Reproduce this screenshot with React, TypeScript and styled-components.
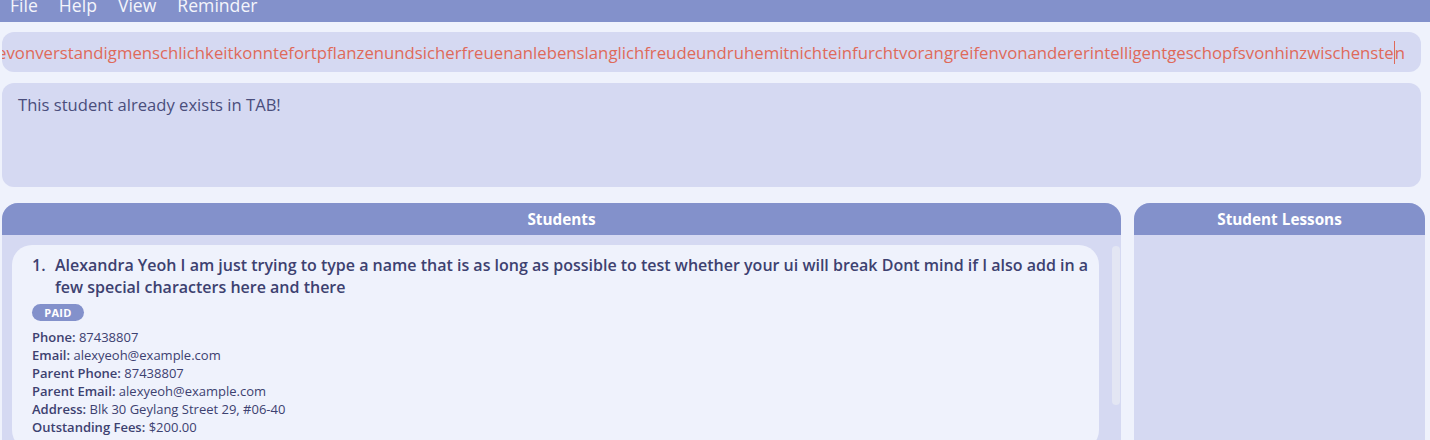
import React from "react";
import styled, { createGlobalStyle } from "styled-components";

const GlobalStyle = createGlobalStyle`
  html, body { margin: 0; padding: 0; background: #eff2fc; }
  body { font-family: "Open Sans", "Noto Sans", sans-serif; }
  * { box-sizing: border-box; }
`;

const Page = styled.div`
  height: 440px;
  overflow: hidden;
  display: flex;
  flex-direction: column;
  background: #eff2fc;
`;

const MenuBar = styled.div`
  height: 22px;
  flex-shrink: 0;
  background: #8391cb;
  display: flex;
  gap: 21px;
  padding-left: 10px;
  overflow: hidden;
`;

const MenuItem = styled.span`
  font-size: 17.6px;
  line-height: 17px;
  margin-top: -3px;
  color: #f4f5fb;
  font-weight: 400;
`;

const Content = styled.div`
  flex: 1;
  min-height: 0;
  display: flex;
  flex-direction: column;
  padding-left: 2px;
`;

const CommandBox = styled.div`
  margin-top: 10px;
  margin-right: 9px;
  height: 40px;
  border-radius: 12px;
  background: #d5d9f2;
  display: flex;
  align-items: center;
  justify-content: flex-end;
  overflow: hidden;
  padding-right: 16px;
`;

const CommandText = styled.span`
  flex-shrink: 0;
  white-space: nowrap;
  font-size: 16.75px;
  color: #df6a5a;
  display: flex;
  align-items: center;
`;

const Caret = styled.span`
  display: inline-block;
  width: 1px;
  height: 23px;
  background: #df6a5a;
`;

const ResultBox = styled.div`
  margin-top: 11px;
  margin-right: 9px;
  height: 104px;
  border-radius: 12px;
  background: #d5d9f2;
  padding: 10px 16px;
  font-size: 16.6px;
  color: #4a4e7c;
`;

const PanelsRow = styled.div`
  margin-top: 16px;
  flex: 1;
  min-height: 0;
  display: flex;
  gap: 13px;
  padding-right: 5px;
`;

const Panel = styled.section<{ $width?: number }>`
  ${(p) => (p.$width ? `width: ${p.$width}px;` : "flex: 1;")}
  flex-shrink: 0;
  display: flex;
  flex-direction: column;
  background: #d5d9f2;
  border-radius: 16px 16px 0 0;
  overflow: hidden;
`;

const PanelHeader = styled.div`
  height: 32px;
  flex-shrink: 0;
  background: #8391cb;
  color: #ffffff;
  font-weight: 700;
  font-size: 15.3px;
  display: flex;
  align-items: center;
  justify-content: center;
`;

const ListBody = styled.div`
  flex: 1;
  min-height: 0;
  display: flex;
  gap: 13px;
  padding: 10px 1px 0 10px;
`;

const CardColumn = styled.div`
  flex: 1;
  display: flex;
  flex-direction: column;
  gap: 10px;
`;

const ScrollThumb = styled.div`
  width: 8px;
  height: 159px;
  margin-top: 1px;
  border-radius: 4px;
  background: #e3e6f3;
  flex-shrink: 0;
`;

const Card = styled.article`
  background: #eff2fc;
  border-radius: 20px;
  padding: 9px 10px 14px 20px;
  color: #3d4170;
`;

const NameRow = styled.div`
  display: flex;
  font-weight: 600;
  font-size: 16px;
  line-height: 22px;
`;

const Index = styled.span`
  width: 23px;
  flex-shrink: 0;
`;

const Badge = styled.span`
  display: inline-flex;
  align-items: center;
  justify-content: center;
  margin: 6px 0 0 0;
  width: 52px;
  height: 17px;
  border-radius: 9px;
  background: #8391cb;
  color: #ffffff;
  font-weight: 700;
  font-size: 11px;
  letter-spacing: 0.3px;
`;

const Details = styled.div`
  margin-top: 6px;
  font-size: 13px;
  line-height: 18px;
`;

const Label = styled.b`
  font-weight: 600;
`;

const COMMAND =
  "add n/Hubert Blaine Wolfeschlegelsteinhausenbergerdorffwelchevoralternwarengewissenhaftschaferswessenschafewarenwohlgepflegeundsorgfaltigkeitbeschutzenvonangreifendurchihrraubgierigfeindewelchevoralternzwolftausendjahresvorandieerscheinenvanderersteerdemenschderraumschiffgebrauchlichtalsseinursprungvonkraftgestartseinlangefahrthinzwischensternartigraumaufdersuchenachdiesternwelchegehabtbewohnbarplanetenkreisedrehensichundwohinderneurassevonverstandigmenschlichkeitkonntefortpflanzenundsicherfreuenanlebenslanglichfreudeundruhemitnichteinfurchtvorangreifenvonandererintelligentgeschopfsvonhinzwischenste";

const details: [string, string][] = [
  ["Phone", "87438807"],
  ["Email", "alexyeoh@example.com"],
  ["Parent Phone", "87438807"],
  ["Parent Email", "alexyeoh@example.com"],
  ["Address", "Blk 30 Geylang Street 29, #06-40"],
  ["Outstanding Fees", "$200.00"],
];

export default function App() {
  return (
    <>
      <GlobalStyle />
      <Page>
        <MenuBar>
          <MenuItem>File</MenuItem>
          <MenuItem>Help</MenuItem>
          <MenuItem>View</MenuItem>
          <MenuItem>Reminder</MenuItem>
        </MenuBar>
        <Content>
          <CommandBox>
            <CommandText>
              {COMMAND}
              <Caret />n
            </CommandText>
          </CommandBox>
          <ResultBox>This student already exists in TAB!</ResultBox>
          <PanelsRow>
            <Panel>
              <PanelHeader>Students</PanelHeader>
              <ListBody>
                <CardColumn>
                  <Card>
                    <NameRow>
                      <Index>1.</Index>
                      <span>
                        Alexandra Yeoh I am just trying to type a name that is as long as possible to test
                        whether your ui will break Dont mind if I also add in a few special characters here and
                        there
                      </span>
                    </NameRow>
                    <Badge>PAID</Badge>
                    <Details>
                      {details.map(([k, v]) => (
                        <div key={k}>
                          <Label>{k}:</Label> {v}
                        </div>
                      ))}
                    </Details>
                  </Card>
                </CardColumn>
                <ScrollThumb />
              </ListBody>
            </Panel>
            <Panel $width={291}>
              <PanelHeader>Student Lessons</PanelHeader>
            </Panel>
          </PanelsRow>
        </Content>
      </Page>
    </>
  );
}
